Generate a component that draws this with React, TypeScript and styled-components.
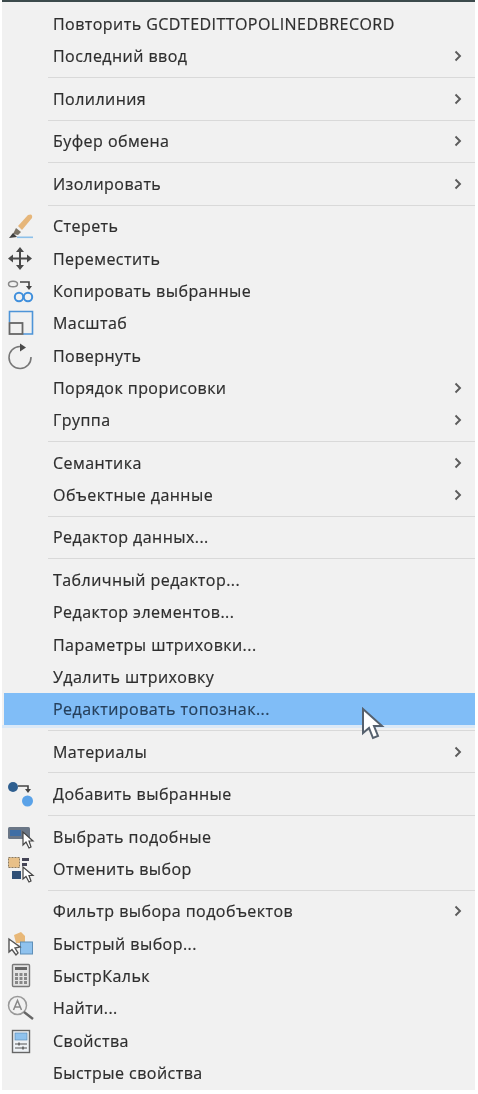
import React from "react";
import styled, { createGlobalStyle } from "styled-components";

const GlobalStyle = createGlobalStyle`
  html, body {
    margin: 0;
    padding: 0;
    background: #ffffff;
  }
`;

// icon coordinates: x is the page x, y is measured from the row's icon box
const EraseIcon = () => (
  <svg width="40" height="28" viewBox="0 0 40 28">
    <path d="M18 14 L28 3 Q33 1 32 6 L22 18 Z" fill="#e6b67a" />
    <path d="M16 16 L21 20 L18 23 L13 22 Z" fill="#7a7265" />
    <path d="M9 26 L13 21 L17 25 Z" fill="#3f3f3f" />
    <rect x="17" y="24.5" width="16" height="1.6" fill="#8cc0ea" />
  </svg>
);

const MoveIcon = () => (
  <svg width="40" height="28" viewBox="0 0 40 28" fill="#4a4a4a">
    <path d="M20 2 L24 7 L16 7 Z M20 25 L24 20 L16 20 Z M8 13.5 L13 9.5 L13 17.5 Z M32 13.5 L27 9.5 L27 17.5 Z" />
    <path d="M19 6 H21 V21 H19 Z M12 12.5 H28 V14.5 H12 Z" />
  </svg>
);

const CopyIcon = () => (
  <svg width="40" height="28" viewBox="0 0 40 28" fill="none">
    <ellipse cx="13" cy="7" rx="4.5" ry="2.8" stroke="#888" strokeWidth="1.5" />
    <path d="M20 5 H29 V10" stroke="#444" strokeWidth="1.6" />
    <path d="M26 9 L29 13 L32 9 Z" fill="#444" />
    <circle cx="19" cy="20" r="4.2" stroke="#3f8fdc" strokeWidth="2" />
    <circle cx="28" cy="20" r="4.2" stroke="#3f8fdc" strokeWidth="2" />
  </svg>
);

const ScaleIcon = () => (
  <svg width="40" height="28" viewBox="0 0 40 28" fill="none">
    <path d="M9.5 13 V2.5 H32.5 V25 H23" stroke="#4d94d8" strokeWidth="1.6" />
    <rect x="9.5" y="14" width="13" height="11" stroke="#666" strokeWidth="1.8" />
  </svg>
);

const RotateIcon = () => (
  <svg width="40" height="28" viewBox="0 0 40 28" fill="none">
    <path d="M20 4.5 A11 11 0 1 0 31 15" stroke="#777" strokeWidth="1.6" />
    <path d="M20 1.5 L26 5.5 L20 9.5 Z" fill="#4a4a4a" />
  </svg>
);

const AddIcon = () => (
  <svg width="40" height="28" viewBox="0 0 40 28" fill="none">
    <circle cx="13" cy="7" r="5" fill="#2f5f90" />
    <path d="M18 6 H28 V10" stroke="#444" strokeWidth="1.6" />
    <path d="M25 9 L28 13 L31 9 Z" fill="#444" />
    <circle cx="27.5" cy="21" r="5.5" fill="#5aa2e8" />
  </svg>
);

const SelectSimilarIcon = () => (
  <svg width="40" height="28" viewBox="0 0 40 28">
    <rect x="8" y="4" width="22" height="12" rx="1.5" fill="#6a7686" />
    <rect x="10" y="7" width="11" height="6" fill="#3f6ea5" />
    <path d="M23 9 L23 22 L26 19 L29 25 L31 24 L29 18 L33 18 Z" fill="#fff" stroke="#444" strokeWidth="1.2" />
  </svg>
);

const DeselectIcon = () => (
  <svg width="40" height="28" viewBox="0 0 40 28">
    <rect x="8.5" y="2.5" width="11" height="10" fill="#e8c088" stroke="#8a7a60" strokeDasharray="2 1" />
    <rect x="22" y="3" width="7" height="3" fill="#445" />
    <rect x="22" y="8" width="5" height="3" fill="#445" />
    <rect x="12" y="16" width="9" height="8" fill="#2f4f75" />
    <path d="M23 12 L23 24 L26 21.5 L29 27 L31 26 L29 20.5 L33 20.5 Z" fill="#fff" stroke="#444" strokeWidth="1.2" />
  </svg>
);

const QuickSelectIcon = () => (
  <svg width="40" height="28" viewBox="0 0 40 28">
    <path d="M14 5 L21 2 L25 6 L25 13 L16 13 Z" fill="#e8b878" />
    <rect x="20.5" y="12" width="12" height="12" fill="#8fc2ee" stroke="#5f8fb8" />
    <path d="M9 9 L9 22 L12 19.5 L16 25 L18 23 L15 18 L20 17 Z" fill="#fff" stroke="#555" strokeWidth="1.4" />
  </svg>
);

const CalcIcon = () => (
  <svg width="40" height="28" viewBox="0 0 40 28">
    <rect x="12.5" y="2.5" width="17" height="22" rx="1" fill="#e4e4e4" stroke="#777" strokeWidth="1.4" />
    <rect x="15" y="5" width="12" height="3" fill="#666" />
    {[11, 15, 19].map((y) =>
      [15, 19.5, 24].map((x) => (
        <rect key={`${x}-${y}`} x={x} y={y} width="3" height="3" fill="#888" />
      ))
    )}
  </svg>
);

const FindIcon = () => (
  <svg width="40" height="28" viewBox="0 0 40 28" fill="none">
    <circle cx="17.5" cy="11.5" r="9" stroke="#999" strokeWidth="1.5" />
    <path d="M13.5 16 L17.5 6.5 L21.5 16 M15 13 H20" stroke="#888" strokeWidth="1.5" />
    <path d="M24 18 L33 25" stroke="#666" strokeWidth="2.4" />
  </svg>
);

const PropertiesIcon = () => (
  <svg width="40" height="28" viewBox="0 0 40 28">
    <rect x="12.5" y="3.5" width="17" height="22" fill="#eef2f6" stroke="#666" strokeWidth="1.4" />
    <rect x="15" y="6" width="12" height="7" fill="#8fc2ee" stroke="#5f8fb8" strokeWidth="0.7" />
    <path d="M15 17 H27 M15 21 H27" stroke="#555" strokeWidth="1.2" />
    <path d="M19 15.5 V18.5 M23 19.5 V22.5" stroke="#555" strokeWidth="1.4" />
  </svg>
);

const Chevron = () => (
  <Arrow width="8" height="12" viewBox="0 0 8 12" fill="none">
    <path d="M1.5 1.5 L6 6 L1.5 10.5" stroke="#5c5c5c" strokeWidth="1.9" />
  </Arrow>
);

type Entry =
  | "sep"
  | { label: string; sub?: boolean; icon?: React.ReactNode; active?: boolean };

const entries: Entry[] = [
  { label: "Повторить GCDTEDITTOPOLINEDBRECORD" },
  { label: "Последний ввод", sub: true },
  "sep",
  { label: "Полилиния", sub: true },
  "sep",
  { label: "Буфер обмена", sub: true },
  "sep",
  { label: "Изолировать", sub: true },
  "sep",
  { label: "Стереть", icon: <EraseIcon /> },
  { label: "Переместить", icon: <MoveIcon /> },
  { label: "Копировать выбранные", icon: <CopyIcon /> },
  { label: "Масштаб", icon: <ScaleIcon /> },
  { label: "Повернуть", icon: <RotateIcon /> },
  { label: "Порядок прорисовки", sub: true },
  { label: "Группа", sub: true },
  "sep",
  { label: "Семантика", sub: true },
  { label: "Объектные данные", sub: true },
  "sep",
  { label: "Редактор данных..." },
  "sep",
  { label: "Табличный редактор..." },
  { label: "Редактор элементов..." },
  { label: "Параметры штриховки..." },
  { label: "Удалить штриховку" },
  { label: "Редактировать топознак...", active: true },
  "sep",
  { label: "Материалы", sub: true },
  "sep",
  { label: "Добавить выбранные", icon: <AddIcon /> },
  "sep",
  { label: "Выбрать подобные", icon: <SelectSimilarIcon /> },
  { label: "Отменить выбор", icon: <DeselectIcon /> },
  "sep",
  { label: "Фильтр выбора подобъектов", sub: true },
  { label: "Быстрый выбор...", icon: <QuickSelectIcon /> },
  { label: "БыстрКальк", icon: <CalcIcon /> },
  { label: "Найти...", icon: <FindIcon /> },
  { label: "Свойства", icon: <PropertiesIcon /> },
  { label: "Быстрые свойства" },
];

const App = () => {
  return (
    <Page>
      <GlobalStyle />
      <Menu>
        {entries.map((e, i) =>
          e === "sep" ? (
            <Separator key={i} />
          ) : (
            <Row key={i} $active={e.active}>
              <IconSlot>{e.icon}</IconSlot>
              <Label $active={e.active}>{e.label}</Label>
              {e.sub ? <Chevron /> : null}
            </Row>
          )
        )}
      </Menu>
      <Pointer width="24" height="36" viewBox="0 0 24 36">
        <path
          d="M2 2 L2 26 L8 21 L12 31 L17 29 L13 19 L21 19 Z"
          fill="#ffffff"
          stroke="#56616e"
          strokeWidth="2"
        />
      </Pointer>
    </Page>
  );
};

const Page = styled.div`
  position: relative;
  width: 478px;
  height: 1094px;
  overflow: hidden;
  background: #ffffff;
  filter: blur(0.5px);
`;

const Menu = styled.div`
  box-sizing: border-box;
  width: 473px;
  height: 1090px;
  margin-left: 2px;
  padding-top: 6px;
  background: #f1f1f1;
  border-top: 2px solid #3c4a4c;
`;

const Row = styled.div<{ $active?: boolean }>`
  display: flex;
  align-items: center;
  height: 32.3px;
  padding-right: 13px;
  background: ${(p) =>
    p.$active
      ? "linear-gradient(#80bdf7, #80bdf7) 2px 0 / 100% 100% no-repeat"
      : "transparent"};
  box-shadow: ${(p) => (p.$active ? "0 3px 0 #dbe9f7" : "none")};
`;

const IconSlot = styled.div`
  flex: 0 0 51px;
  height: 28px;
  display: flex;
  align-items: center;

  svg {
    flex: none;
    margin-left: -2px;
  }
`;

const Label = styled.div<{ $active?: boolean }>`
  flex: 1;
  font-family: "Open Sans", "Liberation Sans", sans-serif;
  font-size: 16px;
  letter-spacing: 0.45px;
  -webkit-text-stroke: 0.2px currentColor;
  color: ${(p) => (p.$active ? "#26405c" : "#2e2e2e")};
  white-space: nowrap;
`;

const Arrow = styled.svg`
  flex: none;
`;

const Separator = styled.div`
  height: 1px;
  margin: 4.6px 0 4.6px 46px;
  background: #d9d9d9;
`;

const Pointer = styled.svg`
  position: absolute;
  left: 361px;
  top: 707px;
`;

export default App;
